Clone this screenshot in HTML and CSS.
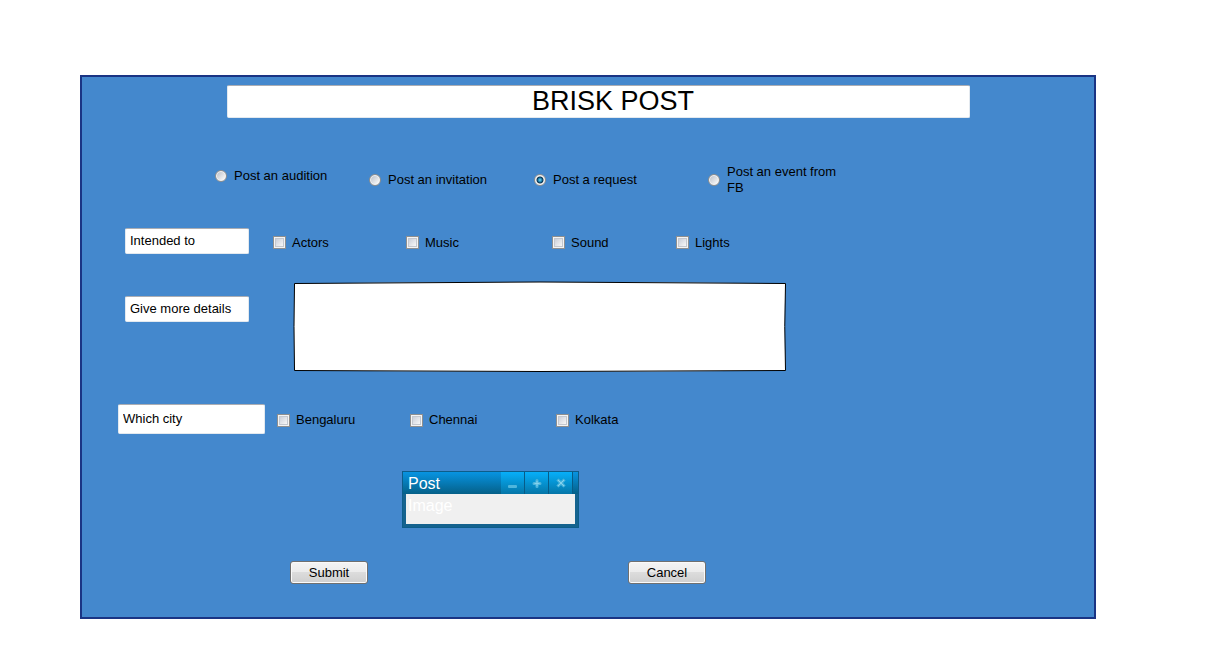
FILE: index.html
```html
<!DOCTYPE html>
<html lang="en">
<head>
<meta charset="utf-8">
<title>Brisk Post</title>
<link rel="stylesheet" href="styles.css">
</head>
<body>
<form class="panel">
  <div class="row row-title">
    <input class="field field-title" type="text" value="BRISK POST" aria-label="Title">
  </div>

  <div class="row row-kind" role="radiogroup" aria-label="Kind of post">
    <label class="choice choice-first"><input class="radio" type="radio" name="kind"><span>Post an audition</span></label>
    <label class="choice"><input class="radio" type="radio" name="kind"><span>Post an invitation</span></label>
    <label class="choice"><input class="radio" type="radio" name="kind" checked><span>Post a request</span></label>
    <label class="choice choice-narrow"><input class="radio" type="radio" name="kind"><span>Post an event from FB</span></label>
  </div>

  <div class="row row-audience">
    <input class="field field-label" type="text" value="Intended to" aria-label="Audience heading">
    <label class="choice"><input class="check" type="checkbox"><span>Actors</span></label>
    <label class="choice"><input class="check" type="checkbox"><span>Music</span></label>
    <label class="choice"><input class="check" type="checkbox"><span>Sound</span></label>
    <label class="choice"><input class="check" type="checkbox"><span>Lights</span></label>
  </div>

  <div class="row row-details">
    <input class="field field-label" type="text" value="Give more details" aria-label="Details heading">
    <div class="sketch">
      <svg class="sketch-frame" viewBox="0 0 492 91" preserveAspectRatio="none" aria-hidden="true">
        <path d="M.5 2.500Q246 -.5 491.500 2.500Q490 45 491.500 89.500Q246 91.500 .5 89.500Q-.5 45 .5 2.500Z" fill="#fff" stroke="#000" stroke-width="1"/>
      </svg>
      <textarea class="sketch-text" aria-label="More details"></textarea>
    </div>
  </div>

  <div class="row row-city">
    <input class="field field-city" type="text" value="Which city" aria-label="City heading">
    <label class="choice"><input class="check" type="checkbox"><span>Bengaluru</span></label>
    <label class="choice"><input class="check" type="checkbox"><span>Chennai</span></label>
    <label class="choice"><input class="check" type="checkbox"><span>Kolkata</span></label>
  </div>

  <div class="row row-window">
    <section class="window">
      <header class="window-bar">
        <span class="window-title">Post</span>
        <button class="window-button" type="button" aria-label="Minimize">
          <svg width="11" height="11" viewBox="0 0 11 11"><rect x="1" y="7" width="9" height="3" rx="1" fill="#4fb6dd"/></svg>
        </button>
        <button class="window-button" type="button" aria-label="Maximize">
          <svg width="11" height="11" viewBox="0 0 11 11"><path d="M6 2.500v6M3 5.500h6" fill="none" stroke="#4fb6dd" stroke-width="3" stroke-linecap="round"/><path d="M6 3v5M3.500 5.500h5" fill="none" stroke="#85d2ee" stroke-width="1"/></svg>
        </button>
        <button class="window-button" type="button" aria-label="Close">
          <svg width="11" height="11" viewBox="0 0 11 11"><path d="M3.500 2.500l5 5M8.500 2.500l-5 5" fill="none" stroke="#4fb6dd" stroke-width="3" stroke-linecap="square"/><path d="M3 2l6 6M9 2L3 8" fill="none" stroke="#85d2ee" stroke-width="1"/></svg>
        </button>
      </header>
      <div class="window-body">Image</div>
    </section>
  </div>

  <div class="row row-actions">
    <button class="button" type="submit">Submit</button>
    <button class="button" type="button">Cancel</button>
  </div>
</form>
</body>
</html>
```

FILE: styles.css
```css
* {
  box-sizing: border-box;
}

body {
  margin: 0;
  padding: 75px 115px 48px 80px;
  background: #fff;
  color: #000;
  font: 13px/16px "Liberation Sans", Arial, sans-serif;
}

input,
textarea,
button {
  margin: 0;
  font: inherit;
  color: inherit;
}

.panel {
  padding: 8px 0 33px;
  border: 2px solid #1a3484;
  background: #4488cd;
}

.row {
  display: grid;
  align-items: center;
}

.row-title {
  grid-template-columns: 145fr 743fr 124fr;
}

.row-title > :first-child,
.row-kind > :first-child,
.row-audience > :first-child,
.row-details > :first-child,
.row-city > :first-child,
.row-window > :first-child,
.row-actions > :first-child {
  grid-column-start: 2;
}

.row-kind {
  grid-template-columns: 133fr 154fr 165fr 174fr 386fr;
  margin-top: 46px;
}

.row-audience {
  grid-template-columns: 43fr 148fr 133fr 146fr 124fr 418fr;
  margin-top: 32px;
}

.row-details {
  grid-template-columns: 43fr 169fr 492fr 308fr;
  align-items: start;
  margin-top: 26px;
}

.row-city {
  grid-template-columns: 36fr 159fr 133fr 146fr 538fr;
  margin-top: 32px;
}

.row-window {
  grid-template-columns: 320fr 692fr;
  margin-top: 37px;
}

.row-actions {
  grid-template-columns: 208fr 338fr 466fr;
  margin-top: 33px;
}

.field {
  height: 26px;
  padding: 0 4px 1px;
  border: 1px solid #e3e9ef;
  border-top-color: #abadb3;
  border-radius: 2px;
  background: #fff;
}

.field-title {
  width: 100%;
  height: 33px;
  padding: 0 4px 0 33px;
  font-size: 27px;
  line-height: 31px;
  text-align: center;
}

.field-label {
  width: 124px;
}

.row-audience .field-label {
  align-self: start;
}

.row-details .field-label {
  margin-top: 15px;
}

.field-city {
  width: 147px;
  height: 30px;
}

.choice {
  display: flex;
  align-items: center;
  gap: 7px;
  min-height: 24px;
}

.row-audience .choice,
.row-city .choice {
  gap: 6px;
  padding-top: 2px;
  min-height: 27px;
}

.choice-first {
  align-self: start;
}

.choice-narrow {
  max-width: 140px;
}

.radio,
.check {
  appearance: none;
  flex: none;
}

.radio {
  width: 12px;
  height: 12px;
  border: 1px solid #8e8f8f;
  border-radius: 50%;
  background: linear-gradient(135deg, #b4bac4, #f5f5f5 80%);
  box-shadow: inset 0 0 0 1px #f4f4f4;
}

.radio:checked {
  background: radial-gradient(circle at 50% 50%, #7edcf8 0, #1478a8 2px, #0b2f4c 3px, #f0f2f4 4px);
}

.check {
  width: 13px;
  height: 13px;
  border: 1px solid #8e8f8f;
  background: linear-gradient(135deg, #bfc5d2, #f6f6f6 80%);
  box-shadow: inset 0 0 0 1px #f4f4f4, inset 0 0 0 2px #c4c8cf;
}

.sketch {
  display: grid;
}

.sketch-frame,
.sketch-text {
  grid-area: 1 / 1;
  width: 100%;
  height: 91px;
}

.sketch-frame {
  overflow: visible;
}

.sketch-text {
  padding: 6px;
  border: 0;
  background: transparent;
  resize: none;
}

.window {
  width: 177px;
  border: 1px solid #0d5d8a;
  background: #15638f;
  color: #fff;
  font-size: 16px;
  line-height: 24px;
}

.window-bar {
  display: flex;
  height: 22px;
  padding-right: 5px;
  background: linear-gradient(#0794e2, #056088);
}

.window-title {
  flex: 1;
  padding-left: 5px;
}

.window-button {
  display: flex;
  align-items: center;
  justify-content: center;
  width: 24px;
  height: 22px;
  padding: 0;
  border: 0;
  border-right: 1px solid #075c88;
  background: linear-gradient(#06affa, #0576a8);
}

.window-body {
  height: 30px;
  margin: 0 3px 3px;
  padding-left: 2px;
  background: #f0f0f0;
}

.button {
  width: 78px;
  height: 23px;
  padding: 0;
  border: 1px solid #707070;
  border-radius: 3px;
  background: linear-gradient(#f4f4f4, #ebebeb 50%, #dcdcdc 50%, #cfcfcf);
  box-shadow: inset 0 0 0 1px #fafafa;
}
```
